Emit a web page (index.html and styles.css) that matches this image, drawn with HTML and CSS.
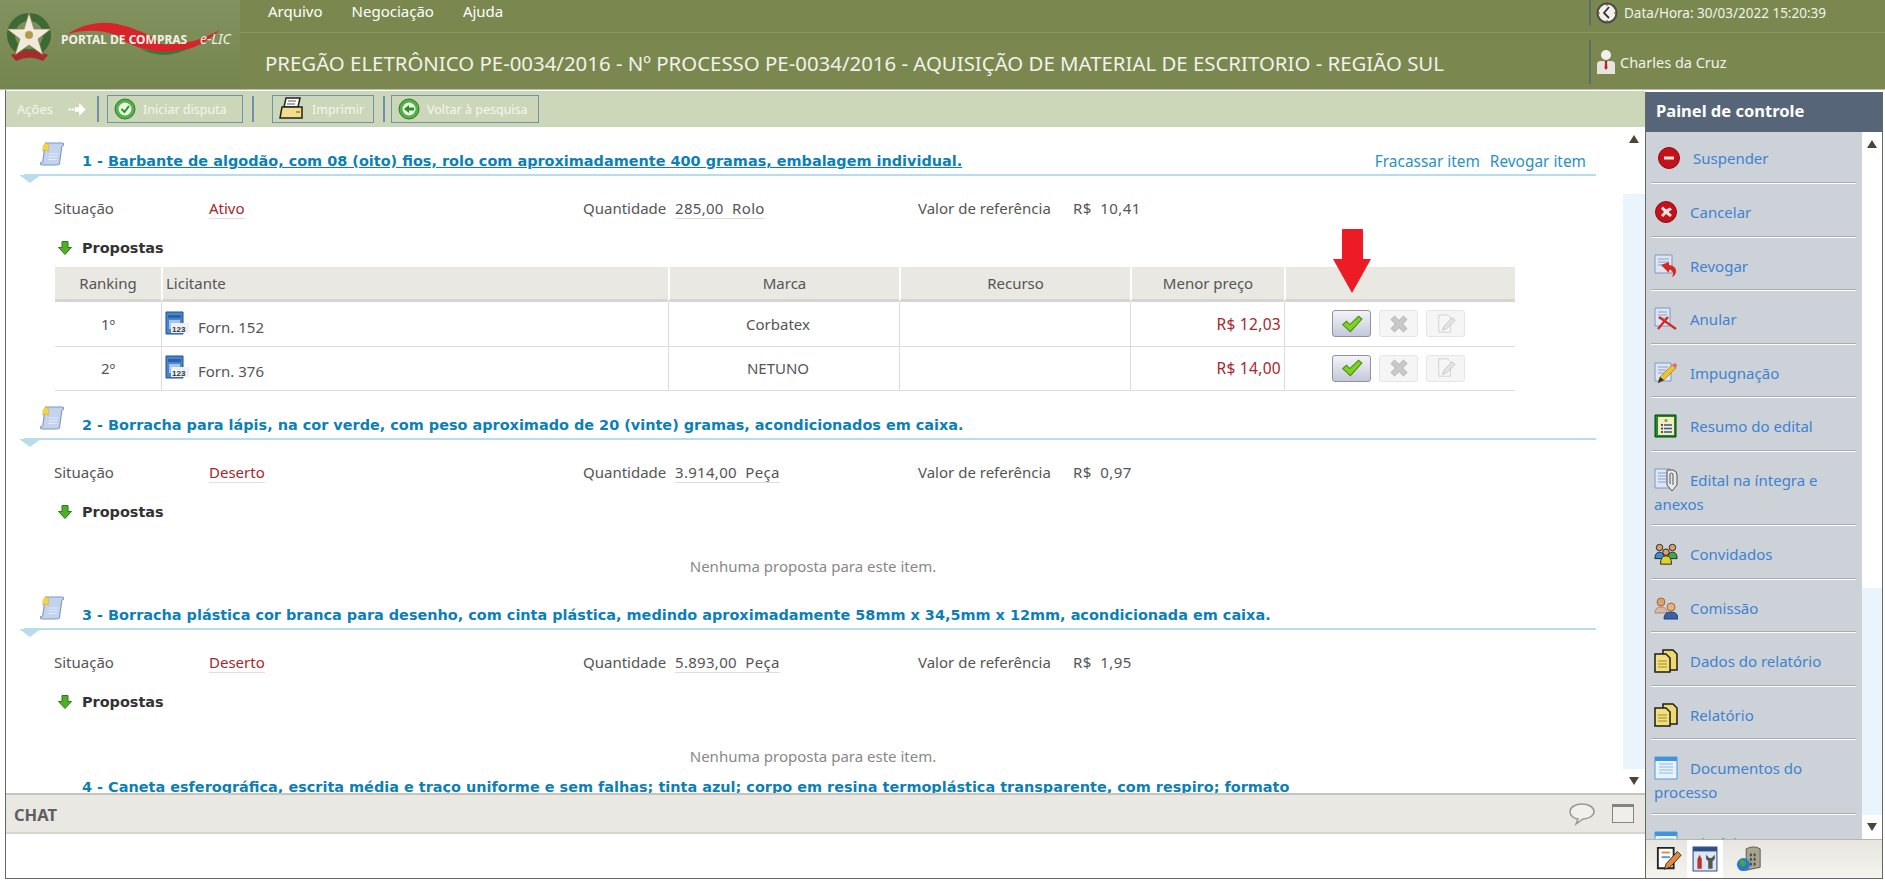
FILE: index.html
```html
<html>
<head>
    <meta charset="utf-8">
    <title>Portal de Compras e-LIC</title>
    <link rel="stylesheet" href="styles.css">
</head>
<body>
    <svg class="defs" width="0" height="0">
        <symbol id="i-scroll" viewBox="0 0 22 26" preserveAspectRatio="none">
            <path d="M5 1h15q2 0 1.500 2.500l-1.500 1-2 18q0 2.500-3 2.500H2q-2 0-1.500-2.500l2-1z" fill="#c3d3ee" stroke="#7d97c4"/>
            <path d="M5 1q3 0 3 3.500L7.500 10 5 8.500 2.500 10 3 4z" fill="#f5d640" stroke="#c9a92a" stroke-width=".5"/>
            <path d="M8.500 13h8M8 16h8M7.500 19h8" stroke="#e4ecf9"/>
        </symbol>
        <symbol id="i-down" viewBox="0 0 16 16">
            <path d="M5 1.500h6v6h3.500L8 14.500 1.500 7.500H5z" fill="#4fae2a" stroke="#2d7d16"/>
        </symbol>
        <symbol id="i-book" viewBox="0 0 24 24">
            <path d="M1 1h17v22H1z" fill="#4d86c8" stroke="#1d4f9c"/>
            <path d="M3 4h13v3H3z" fill="#2a62ae"/>
            <path d="M4 9h11v9H4z" fill="#a5c6ea"/>
            <path d="M6 12h18v10H6z" fill="#eef1f4"/>
            <text x="7" y="20.500" class="icon-num">123</text>
        </symbol>
        <symbol id="i-check" viewBox="0 0 20 18">
            <path d="M1.500 9.500 5 6.500l3 3L16 2l3 2.500L8.500 16z" fill="#7ed321" stroke="#4e8f16"/>
        </symbol>
        <symbol id="i-cross" viewBox="0 0 18 18">
            <path d="M2 5l3-3 4 4 4-4 3 3-4 4 4 4-3 3-4-4-4 4-3-3 4-4z" fill="#c9c9c9" stroke="#bcbcbc"/>
        </symbol>
        <symbol id="i-note" viewBox="0 0 22 22">
            <path d="M3 1h10l3 3v16H3z" fill="#f6f6f6" stroke="#cfcfcf"/>
            <path d="M7 18l2-5 9-9 3 3-9 9z" fill="#e4e4e4" stroke="#c4c4c4"/>
        </symbol>
        <symbol id="i-minus" viewBox="0 0 24 24">
            <circle cx="12" cy="12" r="10.500" fill="#c4121b" stroke="#8d0c12"/>
            <path d="M7 10.500h10v3H7z" fill="#fbe4e4"/>
        </symbol>
        <symbol id="i-cancel" viewBox="0 0 24 24">
            <circle cx="12" cy="12" r="10.500" fill="#c4121b" stroke="#8d0c12"/>
            <path d="M7 8.500l2-2 3 3 4-2 2 2-3.500 2.500L18 15l-2 2-4-3-3 3-2-2 3-3z" fill="#fbe4e4"/>
        </symbol>
        <symbol id="i-revoke" viewBox="0 0 24 24">
            <path d="M1 1h17v18H1z" fill="#dfe6f3" stroke="#7f97c6"/>
            <path d="M4 5h11M4 8h11M4 11h6" stroke="#8aa0cb"/>
            <path d="M7 11l8-3v3q7 1 7 6 0 4-4 6 2-4 0-6-1-2-3-1v3z" fill="#d6281e"/>
        </symbol>
        <symbol id="i-void" viewBox="0 0 24 24">
            <path d="M1 1h15v18H1z" fill="#dfe6f3" stroke="#7f97c6"/>
            <path d="M4 5h9M4 8h9M4 11h9" stroke="#8aa0cb"/>
            <path d="M4 22 14 10M5 10l17 12" stroke="#d6281e" stroke-width="2.200" fill="none"/>
        </symbol>
        <symbol id="i-pencil" viewBox="0 0 24 24">
            <path d="M1 2h16v18H1z" fill="#dfe6f3" stroke="#7f97c6"/>
            <path d="M4 6h10M4 9h8M4 12h6" stroke="#8aa0cb"/>
            <path d="M4 22l2-6L18 4l4 3L10 19z" fill="#f0c233" stroke="#9a7a1c" stroke-width=".7"/>
            <path d="M18 4l4 3 1-3-2-2z" fill="#e06a6a"/>
            <path d="M4 22l2-6 4 3z" fill="#333"/>
        </symbol>
        <symbol id="i-summary" viewBox="0 0 24 24">
            <path d="M1 1h21v22H1z" fill="#1f8a2c" stroke="#0d3d12"/>
            <path d="M4 3h16v18H4z" fill="#f4efb8"/>
            <circle cx="12" cy="6.500" r="1.500" fill="#9b8f4a"/>
            <path d="M7 10h2v2H7zM7 13.500h2v2H7zM7 17h2v2H7z" fill="#3a4fa8"/>
            <path d="M10 11h8M10 14.500h8M10 18h8" stroke="#3a4fa8" stroke-width="1.500"/>
        </symbol>
        <symbol id="i-clip" viewBox="0 0 24 24">
            <path d="M1 1h15v19H1z" fill="#dfe6f3" stroke="#7f97c6"/>
            <path d="M4 5h9M4 8h9M4 11h9M4 14h9" stroke="#8aa0cb"/>
            <path d="M13 2h6q4 1 4 5v10l-5 6-5-6z" fill="#e8e8e8" stroke="#555"/>
            <path d="M16 16V6q2-2 3 0v11" fill="none" stroke="#555"/>
        </symbol>
        <symbol id="i-people" viewBox="0 0 26 24">
            <circle cx="6" cy="5" r="3.500" fill="#d9a070" stroke="#222"/>
            <circle cx="20" cy="5" r="3.500" fill="#d9a070" stroke="#222"/>
            <circle cx="13" cy="10" r="3.500" fill="#d9a070" stroke="#222"/>
            <path d="M1 17q0-7 5-7t5 7z" fill="#3a8fd8" stroke="#222"/>
            <path d="M15 17q0-7 5-7t5 7z" fill="#45a845" stroke="#222"/>
            <path d="M7 23q0-9 6-9t6 9z" fill="#e0d02a" stroke="#222"/>
        </symbol>
        <symbol id="i-board" viewBox="0 0 24 24">
            <circle cx="7" cy="6" r="4" fill="#d9a070" stroke="#a36a3a"/>
            <path d="M1 17q0-6 6-6t6 6z" fill="#d8b8a0" stroke="#a38a7a"/>
            <circle cx="17" cy="11" r="4" fill="#e8b080" stroke="#a36a3a"/>
            <path d="M10 23q0-7 7-7t7 7z" fill="#3a62a8" stroke="#223f78"/>
        </symbol>
        <symbol id="i-files" viewBox="0 0 24 24">
            <path d="M9 1h10l4 4v16H9z" fill="#efd96c" stroke="#1d1d1d" stroke-width="1.500"/>
            <path d="M1 5h11l4 4v14H1z" fill="#f3e07a" stroke="#1d1d1d" stroke-width="1.500"/>
            <path d="M4 12h9M4 15h9M4 18h9" stroke="#9a8a30"/>
        </symbol>
        <symbol id="i-window" viewBox="0 0 24 24">
            <path d="M1 1h22v22H1z" fill="#eaf3fc" stroke="#4a9ce0"/>
            <path d="M1 1h22v4H1z" fill="#3f94dc"/>
            <path d="M5 8h14M5 11h14M5 14h14M5 17h14" stroke="#a9cdee" stroke-width="1.500"/>
        </symbol>
        <symbol id="i-edit" viewBox="0 0 28 28">
            <path d="M2 2h17v22H2z" fill="#fff" stroke="#222" stroke-width="2"/>
            <path d="M6 7h9" stroke="#e8883a" stroke-width="2"/>
            <path d="M6 12h9" stroke="#4a9ce0" stroke-width="2"/>
            <path d="M9 25l2-6L23 6l4 4-12 13z" fill="#e8883a" stroke="#222"/>
        </symbol>
        <symbol id="i-tools" viewBox="0 0 24 24">
            <path d="M1 1h22v22H1z" fill="#dfe6f3" stroke="#2d4f86"/>
            <path d="M1 1h22v4H1z" fill="#2d4f86"/>
            <path d="M5 21v-9l2-4 2 4v9z" fill="#b8342c"/>
            <path d="M13 8l3 3 2 0 3-3v4l-2 2v7h-4v-7l-2-2z" fill="#555"/>
        </symbol>
        <symbol id="i-globe" viewBox="0 0 28 28">
            <path d="M11 3q8-4 15 0v20l-15 3z" fill="#a8a58c" stroke="#555"/>
            <path d="M15 8h2v3h-2zM19 8h2v3h-2zM15 13h2v3h-2zM19 13h2v3h-2zM15 18h2v3h-2zM19 18h2v3h-2z" fill="#444"/>
            <circle cx="8" cy="20" r="7" fill="#2a78c8"/>
            <path d="M4 16q4-2 6 1t-2 5q-4 0-4-6z" fill="#4aa83a"/>
        </symbol>
    </svg>

    <div class="topbar">
        <div class="logo">
            <svg class="logo-arms" width="47" height="50" viewBox="0 0 47 50">
                <circle cx="23" cy="22" r="18" fill="none" stroke="#3d6a34" stroke-width="8"/>
                <path d="M5 42q18-9 37 0l-5 6q-13-7-27 0z" fill="#a82a2a"/>
                <path d="M23 0l5 16 17 0-13 10 5 16-14-10-14 10 5-16L1 16l17 0z" fill="#efeadb" stroke="#8a7b4c" stroke-width=".7"/>
                <circle cx="23" cy="22" r="4" fill="#b59a4a"/>
            </svg>
            <svg class="logo-swoosh" width="153" height="34" viewBox="0 0 153 34">
                <path d="M0 12Q25-3 50 2t45 20q30 2 58-14-28 26-63 22Q60 24 50 13 25 5 0 12z" fill="#d8232a"/>
                <path d="M72 26q25 8 50 0-25 14-50 0z" fill="#2f7d3a"/>
            </svg>
            <span class="logo-text">PORTAL DE COMPRAS</span>
            <span class="logo-lic">e-LIC</span>
        </div>
        <div class="topbar-main">
            <div class="topline">
                <nav class="menu">
                    <a>Arquivo</a>
                    <a>Negociação</a>
                    <a>Ajuda</a>
                </nav>
                <div class="info info-time">
                    <svg width="22" height="22" viewBox="0 0 22 22">
                        <circle cx="11" cy="11" r="9.500" fill="#f2f0ea" stroke="#4a4a44" stroke-width="2"/>
                        <path d="M13 5l-5 6 5 5" fill="none" stroke="#333" stroke-width="1.800"/>
                        <path d="M11 2v2M11 18v2M2 11h2M18 11h2" stroke="#b3262a"/>
                    </svg>
                    <span>Data/Hora: 30/03/2022 15:20:39</span>
                </div>
            </div>
            <div class="bottomline">
                <h1 class="page-title">PREGÃO ELETRÔNICO PE-0034/2016 - Nº PROCESSO PE-0034/2016 - AQUISIÇÃO DE MATERIAL DE ESCRITORIO - REGIÃO SUL</h1>
                <div class="info info-user">
                    <svg width="20" height="26" viewBox="0 0 20 26">
                        <circle cx="10" cy="6" r="5" fill="#f2f0ea"/>
                        <path d="M1 25V15q0-3 4-3h10q4 0 4 3v10z" fill="#e6e4dc"/>
                        <path d="M8.500 12h3l-.5 2 .5 5-1.500 2-1.500-2 .5-5z" fill="#b3262a"/>
                    </svg>
                    <span>Charles da Cruz</span>
                </div>
            </div>
        </div>
    </div>

    <div class="main">
        <div class="left">
            <div class="toolbar">
                <span class="toolbar-label">Ações</span>
                <svg class="toolbar-arrow" width="20" height="15" viewBox="0 0 18 14">
                    <path d="M1 6h2v2H1zM4 6h2v2H4zM7 5h4V1l6 6-6 6V9H7z" fill="#fff"/>
                </svg>
                <span class="toolbar-sep"></span>
                <button class="tool-btn tool-start">
                    <svg width="22" height="22" viewBox="0 0 22 22">
                        <circle cx="11" cy="11" r="10" fill="#55b04a" stroke="#2f7d2a"/>
                        <circle cx="11" cy="11" r="6.500" fill="#e9f5e4"/>
                        <path d="M7.500 11l3 3 4.500-6" fill="none" stroke="#2f8d2a" stroke-width="2"/>
                    </svg>
                    Iniciar disputa
                </button>
                <span class="toolbar-sep"></span>
                <button class="tool-btn tool-print">
                    <svg width="26" height="26" viewBox="0 0 26 26">
                        <path d="M7 2h14l-2 9H5z" fill="#fff" stroke="#222" stroke-width="1.500"/>
                        <path d="M3 11h20v11H1z" fill="#f1dd8c" stroke="#222" stroke-width="1.500"/>
                        <path d="M9 5h8M8 8h8" stroke="#555"/>
                        <path d="M17 15h4v2h-4z" fill="#b8982c"/>
                    </svg>
                    Imprimir
                </button>
                <span class="toolbar-sep"></span>
                <button class="tool-btn tool-back">
                    <svg width="22" height="22" viewBox="0 0 22 22">
                        <circle cx="11" cy="11" r="10" fill="#55b04a" stroke="#2f7d2a"/>
                        <circle cx="11" cy="11" r="6.500" fill="#e9f5e4"/>
                        <path d="M6 11l5-4v2.500h5v3h-5V15z" fill="#2f8d2a"/>
                    </svg>
                    Voltar à pesquisa
                </button>
            </div>

            <div class="scrollarea">
                <div class="items">
                    <section class="item">
                        <header class="item-head">
                            <svg class="item-icon"><use href="#i-scroll"/></svg>
                            <a class="item-title"><span>1 - </span><u>Barbante de algodão, com 08 (oito) fios, rolo com aproximadamente 400 gramas, embalagem individual.</u></a>
                            <div class="item-links"><a>Fracassar item</a><a>Revogar item</a></div>
                        </header>
                        <div class="item-data">
                            <span>Situação</span>
                            <span><b class="status">Ativo</b></span>
                            <span>Quantidade</span>
                            <span><b class="value">285,00&nbsp; Rolo</b></span>
                            <span>Valor de referência</span>
                            <span class="money">R$&nbsp; 10,41</span>
                        </div>
                        <div class="proposals-title"><svg><use href="#i-down"/></svg>Propostas</div>
                        <table class="proposals">
                            <thead>
                                <tr>
                                    <th class="col-rank">Ranking</th>
                                    <th class="col-bidder">Licitante</th>
                                    <th class="col-brand">Marca</th>
                                    <th class="col-appeal">Recurso</th>
                                    <th class="col-price">Menor preço</th>
                                    <th class="col-actions">
                                        <svg class="red-arrow" width="40" height="66" viewBox="0 0 40 66">
                                            <path d="M10 2q0-1 1-1h19q1 0 1 1v29h8L20 65 1 31h9z" fill="#ed1c24"/>
                                        </svg>
                                    </th>
                                </tr>
                            </thead>
                            <tbody>
                                <tr>
                                    <td class="col-rank">1º</td>
                                    <td class="col-bidder"><svg><use href="#i-book"/></svg>Forn. 152</td>
                                    <td class="col-brand">Corbatex</td>
                                    <td></td>
                                    <td class="col-price">R$ 12,03</td>
                                    <td class="col-actions">
                                        <div class="row-btns">
                                            <span class="row-btn on"><svg><use href="#i-check"/></svg></span>
                                            <span class="row-btn off"><svg><use href="#i-cross"/></svg></span>
                                            <span class="row-btn off"><svg><use href="#i-note"/></svg></span>
                                        </div>
                                    </td>
                                </tr>
                                <tr>
                                    <td class="col-rank">2º</td>
                                    <td class="col-bidder"><svg><use href="#i-book"/></svg>Forn. 376</td>
                                    <td class="col-brand">NETUNO</td>
                                    <td></td>
                                    <td class="col-price">R$ 14,00</td>
                                    <td class="col-actions">
                                        <div class="row-btns">
                                            <span class="row-btn on"><svg><use href="#i-check"/></svg></span>
                                            <span class="row-btn off"><svg><use href="#i-cross"/></svg></span>
                                            <span class="row-btn off"><svg><use href="#i-note"/></svg></span>
                                        </div>
                                    </td>
                                </tr>
                            </tbody>
                        </table>
                    </section>

                    <section class="item">
                        <header class="item-head">
                            <svg class="item-icon"><use href="#i-scroll"/></svg>
                            <a class="item-title">2 - Borracha para lápis, na cor verde, com peso aproximado de 20 (vinte) gramas, acondicionados em caixa.</a>
                        </header>
                        <div class="item-data">
                            <span>Situação</span>
                            <span><b class="status">Deserto</b></span>
                            <span>Quantidade</span>
                            <span><b class="value">3.914,00&nbsp; Peça</b></span>
                            <span>Valor de referência</span>
                            <span class="money">R$&nbsp; 0,97</span>
                        </div>
                        <div class="proposals-title"><svg><use href="#i-down"/></svg>Propostas</div>
                        <p class="no-proposals">Nenhuma proposta para este item.</p>
                    </section>

                    <section class="item">
                        <header class="item-head">
                            <svg class="item-icon"><use href="#i-scroll"/></svg>
                            <a class="item-title">3 - Borracha plástica cor branca para desenho, com cinta plástica, medindo aproximadamente 58mm x 34,5mm x 12mm, acondicionada em caixa.</a>
                        </header>
                        <div class="item-data">
                            <span>Situação</span>
                            <span><b class="status">Deserto</b></span>
                            <span>Quantidade</span>
                            <span><b class="value">5.893,00&nbsp; Peça</b></span>
                            <span>Valor de referência</span>
                            <span class="money">R$&nbsp; 1,95</span>
                        </div>
                        <div class="proposals-title"><svg><use href="#i-down"/></svg>Propostas</div>
                        <p class="no-proposals">Nenhuma proposta para este item.</p>
                    </section>

                    <section class="item item-long">
                        <header class="item-head">
                            <svg class="item-icon"><use href="#i-scroll"/></svg>
                            <a class="item-title">4 - Caneta esferográfica, escrita média e traço uniforme e sem falhas; tinta azul; corpo em resina termoplástica transparente, com respiro; formato<br>sextavado, com tampa e carga removível.</a>
                        </header>
                    </section>
                </div>
                <div class="scrollbar">
                    <span class="sb-btn sb-up"></span>
                    <span class="sb-thumb"></span>
                    <span class="sb-track"></span>
                    <span class="sb-btn sb-down"></span>
                </div>
            </div>

            <div class="chat-bar">
                <span class="chat-title">CHAT</span>
                <svg width="28" height="24" viewBox="0 0 28 24">
                    <path d="M14 2C7 2 2 5.500 2 9.500S6 17 10 17l-2 5 7-5c6 0 11-3.500 11-7.500S21 2 14 2z" fill="#f1f0ec" stroke="#9a9a94" stroke-width="1.500"/>
                </svg>
                <span class="chat-window"></span>
            </div>
            <div class="chat-body"></div>
        </div>

        <aside class="panel">
            <h2 class="panel-title">Painel de controle</h2>
            <div class="panel-scroll">
                <ul class="panel-list">
                    <li class="first"><svg><use href="#i-minus"/></svg><a>Suspender</a></li>
                    <li><svg><use href="#i-cancel"/></svg><a>Cancelar</a></li>
                    <li><svg><use href="#i-revoke"/></svg><a>Revogar</a></li>
                    <li><svg><use href="#i-void"/></svg><a>Anular</a></li>
                    <li><svg><use href="#i-pencil"/></svg><a>Impugnação</a></li>
                    <li><svg><use href="#i-summary"/></svg><a>Resumo do edital</a></li>
                    <li class="two"><svg><use href="#i-clip"/></svg><a>Edital na íntegra e anexos</a></li>
                    <li><svg><use href="#i-people"/></svg><a>Convidados</a></li>
                    <li><svg><use href="#i-board"/></svg><a>Comissão</a></li>
                    <li><svg><use href="#i-files"/></svg><a>Dados do relatório</a></li>
                    <li><svg><use href="#i-files"/></svg><a>Relatório</a></li>
                    <li class="two"><svg><use href="#i-window"/></svg><a>Documentos do processo</a></li>
                    <li><svg><use href="#i-window"/></svg><a>Histórico</a></li>
                </ul>
                <div class="scrollbar">
                    <span class="sb-btn sb-up"></span>
                    <span class="sb-thumb"></span>
                    <span class="sb-track"></span>
                    <span class="sb-btn sb-down"></span>
                </div>
            </div>
            <div class="panel-tabs">
                <span class="tab"><svg><use href="#i-edit"/></svg></span>
                <span class="tab active"><svg><use href="#i-tools"/></svg></span>
                <span class="tab tab-last"><svg><use href="#i-globe"/></svg></span>
            </div>
        </aside>
    </div>
</body>
</html>
```

FILE: styles.css
```css
html, body {
    height: 100%;
}
body {
    margin: 0;
    height: 881px;
    overflow: hidden;
    display: flex;
    flex-direction: column;
    background-color: #fff;
    font-family: "Noto Sans", "DejaVu Sans", sans-serif;
    font-size: 15px;
    color: #555;
}
.defs {
    position: absolute;
}
.icon-num {
    font-family: "Liberation Sans", sans-serif;
    font-size: 8px;
    font-weight: bold;
    fill: #333;
}

/* top bar */
.topbar {
    display: flex;
    height: 89px;
    background-color: #7a8850;
    border-bottom: 1px solid #b9bdb0;
    flex-shrink: 0;
}
.logo {
    position: relative;
    width: 240px;
    flex-shrink: 0;
    box-sizing: border-box;
    padding: 13px 0 0 6px;
    background: linear-gradient(#82925f, #75864f);
}
.logo-swoosh {
    position: absolute;
    left: 67px;
    top: 22px;
}
.logo-text {
    position: absolute;
    left: 61px;
    top: 31px;
    font-size: 12px;
    font-weight: bold;
    color: #f3f1e6;
    white-space: nowrap;
}
.logo-lic {
    position: absolute;
    left: 200px;
    top: 29px;
    font-size: 14px;
    font-style: italic;
    color: #f3f1e6;
    white-space: nowrap;
}
.topbar-main {
    flex: 1;
    min-width: 0;
    display: flex;
    flex-direction: column;
}
.topline {
    display: flex;
    height: 32px;
    border-bottom: 1px solid #8a9763;
    flex-shrink: 0;
}
.menu {
    flex: 1;
    display: flex;
    gap: 29px;
    padding: 1px 0 0 28px;
    color: #fff;
}
.bottomline {
    flex: 1;
    display: flex;
}
.page-title {
    flex: 1;
    margin: 0;
    padding: 16px 0 0 25px;
    font-size: 20.400px;
    font-weight: normal;
    color: #f2f2ea;
    white-space: nowrap;
}
.info {
    width: 296px;
    flex-shrink: 0;
    display: flex;
    align-items: flex-start;
    gap: 6px;
    color: #f2f2ea;
    box-sizing: border-box;
    padding-left: 5px;
    border-left: 2px solid #5f6e6c;
}
.info-time {
    height: 25px;
    font-size: 13.500px;
    align-items: center;
}
.info-user {
    height: 44px;
    margin-top: 7px;
    align-items: center;
    gap: 4px;
    font-size: 14.500px;
}

/* main area */
.main {
    flex: 1;
    min-height: 0;
    display: flex;
    padding: 0 2px 2px 5px;
}
.left {
    flex: 1;
    min-width: 0;
    display: flex;
    flex-direction: column;
    border-left: 1px solid #666;
    border-bottom: 1px solid #666;
}
.toolbar {
    height: 36px;
    margin-top: 1px;
    flex-shrink: 0;
    display: flex;
    align-items: center;
    background-color: #ccd6b8;
    color: #f4f6ee;
    font-size: 13px;
}
.toolbar-label {
    margin-left: 11px;
    margin-right: 14px;
}
.toolbar-arrow {
    margin-right: 10px;
}
.toolbar-sep {
    width: 2px;
    height: 26px;
    background-color: #6f8fae;
}
.tool-btn {
    height: 28px;
    box-sizing: border-box;
    display: flex;
    align-items: center;
    padding: 0 0 0 6px;
    gap: 7px;
    background: none;
    border: 1px solid #6f93a8;
    color: #f4f6ee;
    font-family: inherit;
    font-size: 12.500px;
}
.tool-start {
    width: 136px;
    margin: 0 9px 0 8px;
}
.tool-print {
    width: 102px;
    margin: 0 9px 0 18px;
}
.tool-back {
    width: 148px;
    margin-left: 6px;
}

.scrollarea {
    flex: 1;
    min-height: 0;
    display: flex;
    overflow: hidden;
}
.items {
    flex: 1;
    min-width: 0;
    overflow: hidden;
}
.item-head {
    position: relative;
    display: flex;
    align-items: flex-end;
    min-height: 49px;
    margin: 0 27px 0 18px;
    padding: 0 10px 2px 16px;
    box-sizing: border-box;
    border-bottom: 2px solid #b8dcec;
}
.item-head::after {
    content: "";
    position: absolute;
    left: -6px;
    bottom: -9px;
    border-left: 12px solid transparent;
    border-right: 12px solid transparent;
    border-top: 8px solid #b8dcec;
    transform: scaleX(.9);
}
.item-icon {
    width: 24px;
    height: 24px;
    align-self: flex-start;
    margin-top: 15px;
    margin-right: 18px;
    flex-shrink: 0;
}
.item-title {
    flex: 1;
    font-family: "DejaVu Sans", sans-serif;
    font-size: 14.450px;
    font-weight: bold;
    color: #0d7fb6;
    line-height: 22px;
}
.item-links {
    display: flex;
    gap: 10px;
    color: #2a90c0;
    font-size: 15.400px;
}
.item-long .item-head {
    height: 60px;
    border-bottom: none;
}
.item-long .item-head::after {
    display: none;
}
.item-long .item-title {
    align-self: flex-start;
    margin-top: 5px;
}
.item-long .item-icon {
    visibility: hidden;
}
.item-data {
    display: grid;
    grid-template-columns: 155px 374px 92px 243px 155px 1fr;
    padding: 21px 0 0 48px;
    height: 22px;
    line-height: 22px;
}
.item-data b {
    font-weight: normal;
}
.status {
    color: #a8252b;
    border-bottom: 1px solid #eadada;
}
.value {
    border-bottom: 1px solid #ddd;
    letter-spacing: .3px;
}
.money {
    letter-spacing: .4px;
}
.proposals-title {
    display: flex;
    align-items: center;
    gap: 9px;
    margin: 18px 0 0 51px;
    height: 22px;
    font-family: "DejaVu Sans", sans-serif;
    font-size: 14.450px;
    font-weight: bold;
    color: #333;
}
.proposals-title svg {
    width: 16px;
    height: 16px;
}
.proposals {
    width: 1460px;
    margin: 8px 0 0 49px;
    border-collapse: separate;
    border-spacing: 0;
    table-layout: fixed;
    font-size: 15px;
    color: #555;
}
.proposals th, .proposals td {
    box-sizing: border-box;
    padding: 0;
}
.proposals th {
    position: relative;
    height: 35px;
    background-color: #e9e8e3;
    border-bottom: 3px solid #d6d5cf;
    border-left: 2px solid #fff;
    font-weight: normal;
}
.proposals th:first-child {
    border-left: none;
}
.proposals td {
    height: 44.500px;
    border-bottom: 1px solid #ddd;
    border-left: 1px solid #ddd;
    text-align: center;
}
.proposals td:first-child {
    border-left: none;
}
.col-rank {
    width: 106px;
}
th.col-bidder, td.col-bidder {
    width: 507px;
    text-align: left;
    padding-left: 3px;
}
td.col-bidder svg {
    width: 24px;
    height: 24px;
    margin-right: 9px;
    vertical-align: -2px;
}
.col-brand, .col-appeal {
    width: 231px;
}
td.col-brand {
    padding-right: 12px;
}
.col-price {
    width: 154px;
}
td.col-price {
    color: #a8252b;
    font-size: 15.500px;
    letter-spacing: .3px;
    text-align: right;
    padding-right: 3px;
}
.red-arrow {
    position: absolute;
    left: 46px;
    top: -39px;
}
.row-btns {
    display: flex;
    gap: 8px;
    padding-left: 47px;
}
.row-btn {
    width: 39px;
    height: 27px;
    box-sizing: border-box;
    display: flex;
    align-items: center;
    justify-content: center;
    border-radius: 3px;
}
.row-btn svg {
    width: 22px;
    height: 20px;
}
.row-btn.on {
    background: linear-gradient(#f4f4f8, #c4c7da);
    border: 1px solid #8f939f;
}
.row-btn.off {
    background-color: #f5f5f5;
    border: 1px solid #e6e6e6;
}
.no-proposals {
    margin: 0;
    padding: 31px 3px 0 0;
    height: 27px;
    color: #888;
    text-align: center;
    line-height: 24px;
}

/* scrollbars */
.scrollbar {
    width: 20px;
    flex-shrink: 0;
    display: flex;
    flex-direction: column;
    background-color: #eaf4fc;
}
.left .scrollbar {
    width: 22px;
}
.sb-btn {
    height: 24px;
    flex-shrink: 0;
    background-color: #fff;
    display: flex;
    align-items: center;
    justify-content: center;
}
.sb-up::before {
    content: "";
    border-left: 5px solid transparent;
    border-right: 5px solid transparent;
    border-bottom: 8px solid #4d4438;
}
.sb-down::before {
    content: "";
    border-left: 5px solid transparent;
    border-right: 5px solid transparent;
    border-top: 8px solid #4d4438;
}
.sb-thumb {
    height: 43px;
    flex-shrink: 0;
    background-color: #fff;
}
.panel .sb-thumb {
    height: 432px;
}
.sb-track {
    flex: 1;
}

/* chat */
.chat-bar {
    height: 41px;
    flex-shrink: 0;
    box-sizing: border-box;
    display: flex;
    align-items: center;
    gap: 16px;
    padding: 0 11px 0 8px;
    background-color: #e9e8e3;
    border-top: 2px solid #c4c4c0;
    border-bottom: 2px solid #d6d5cf;
}
.chat-title {
    flex: 1;
    padding-top: 2px;
    font-weight: bold;
    font-size: 16.500px;
    color: #5f5f5f;
}
.chat-window {
    width: 22px;
    height: 19px;
    box-sizing: border-box;
    background-color: #efeeea;
    border: 1px solid #85857f;
    border-top-width: 3px;
}
.chat-body {
    height: 44px;
    flex-shrink: 0;
}

/* right panel */
.panel {
    width: 236px;
    flex-shrink: 0;
    display: flex;
    flex-direction: column;
    border: 1px solid #666;
    border-top: none;
    margin-top: 2px;
}
.panel-title {
    margin: 0;
    height: 40px;
    flex-shrink: 0;
    padding-left: 10px;
    line-height: 38px;
    background-color: #566678;
    color: #fff;
    font-size: 16.500px;
}
.panel-scroll {
    flex: 1;
    min-height: 0;
    display: flex;
    overflow: hidden;
}
.panel-list {
    flex: 1;
    min-width: 0;
    margin: 0;
    padding: 0 6px 0 0;
    list-style: none;
    background-color: #cdd2d9;
    color: #3f82cf;
}
.panel-list li {
    height: 53.500px;
    box-sizing: border-box;
    margin-left: 5px;
    padding: 17px 0 0 3px;
    line-height: 24px;
    border-bottom: 1px solid #a9adb3;
    box-shadow: 0 1px 0 #fff;
}
.panel-list li.first {
    height: 51px;
    padding: 14px 0 0 6px;
}
.panel-list li.two {
    height: 74.500px;
}
.panel-list svg {
    width: 24px;
    height: 24px;
    vertical-align: -6px;
    margin-right: 12px;
}
.panel-tabs {
    height: 38px;
    flex-shrink: 0;
    display: flex;
    padding-left: 5px;
    background: linear-gradient(#e6e5df, #f4f3ee);
    border-top: 1px solid #b5b5b0;
}
.tab {
    width: 36px;
    display: flex;
    align-items: center;
    justify-content: center;
}
.tab.active {
    background-color: #fff;
}
.tab-last {
    margin-left: 8px;
}
.tab svg {
    width: 26px;
    height: 26px;
}
```
